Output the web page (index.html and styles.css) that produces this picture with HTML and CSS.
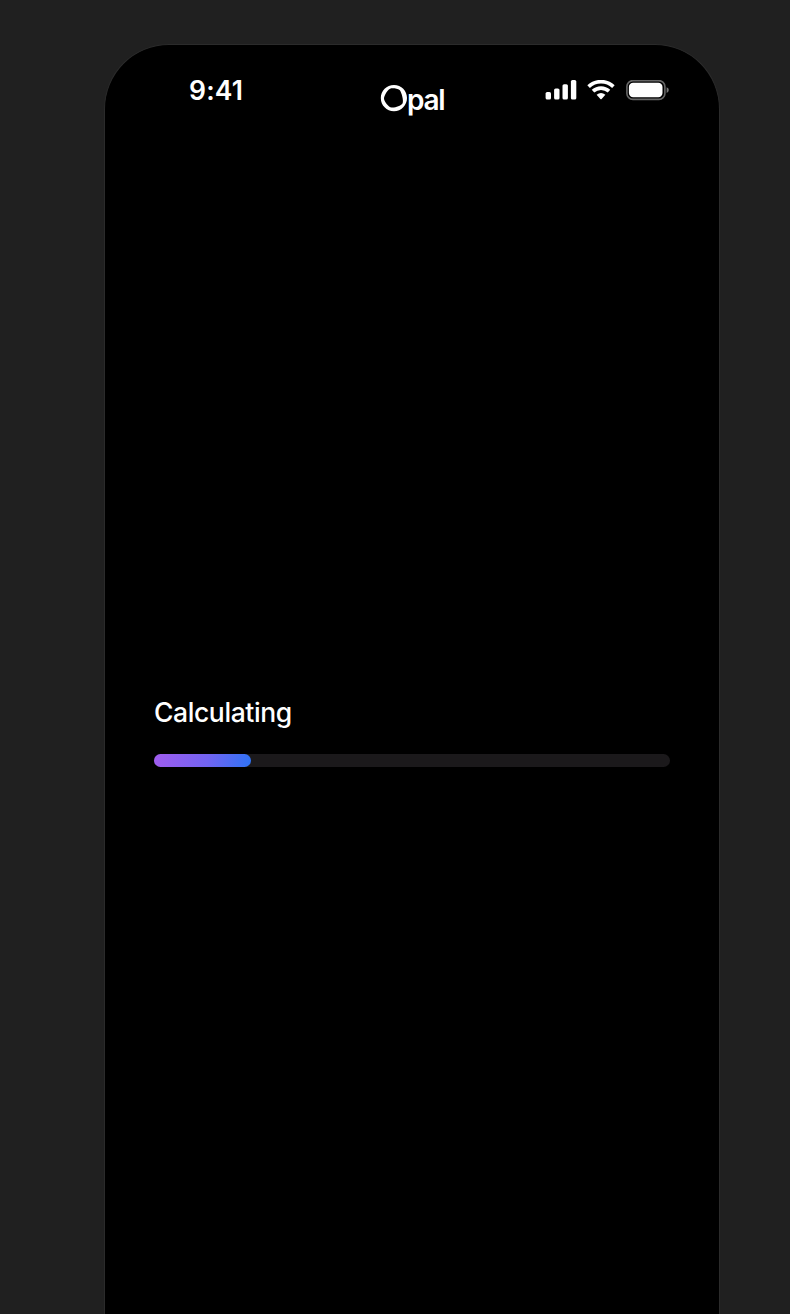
FILE: index.html
```html
<!DOCTYPE html>
<html lang="en">
<head>
<meta charset="utf-8">
<title>Opal</title>
<link rel="stylesheet" href="styles.css">
</head>
<body>
<main class="phone">
  <header class="status">
    <span class="time">9:41</span>
    <div class="brand">
      <svg class="ring" viewBox="0 0 28 28" width="28" height="28" aria-hidden="true">
        <path fill="#fff" fill-rule="evenodd" d="M14 .9C21.4 .9 27 6.8 27 14S21.4 27.2 14 27.2S.8 21.4 .8 14S6.6 .9 14 .9ZM11.2 4.2C8.4 4.4 4 11.6 4 14.4C4 17.4 8.6 23 11.6 23.5C14.8 24 21 21.8 22.5 19.6C24 17 21.6 8.2 19.6 6C17.8 4.3 13.8 4 11.2 4.2Z"/>
      </svg>
      <span class="word">pal</span>
    </div>
    <div class="indicators">
      <svg width="32" height="20" viewBox="0 0 32 20" fill="#fff" aria-hidden="true">
        <rect x=".6" y="12" width="5.4" height="7.6" rx="1.6"/>
        <rect x="9.1" y="8.4" width="5.4" height="11.2" rx="1.6"/>
        <rect x="17.5" y="4.2" width="5.4" height="15.4" rx="1.6"/>
        <rect x="25.9" y="0" width="5.4" height="19.6" rx="1.6"/>
      </svg>
      <svg class="wifi" width="28" height="20" viewBox="0 0 28 20" aria-hidden="true">
        <g fill="none" stroke="#fff" stroke-width="3.7">
          <path d="M1.6 6.6C8.6 0 19.4 0 26.4 6.6"/>
          <path d="M6 11.2C10.6 7 17.4 7 22 11.2"/>
        </g>
        <path fill="#fff" d="M9.6 14.8Q14 11.2 18.4 14.8L14.6 18.9Q14 19.5 13.4 18.9Z"/>
      </svg>
      <svg class="battery" width="44" height="22" viewBox="0 0 44 22" aria-hidden="true">
        <rect x=".9" y=".6" width="38" height="18.8" rx="6" fill="none" stroke="#666" stroke-width="1.6"/>
        <rect x="2.9" y="2.7" width="33.6" height="14.6" rx="4.2" fill="#fff"/>
        <path d="M40.6 7.2Q42.8 7.9 42.8 10T40.6 12.9Z" fill="#777"/>
      </svg>
    </div>
  </header>
  <section class="loading">
    <p class="label">Calculating</p>
    <div class="track"><div class="fill"></div></div>
  </section>
</main>
</body>
</html>
```

FILE: styles.css
```css
* { box-sizing: border-box; }
html, body { margin: 0; height: 100%; }
body {
  background: #202020;
  color: #fff;
  font-family: Inter, "Liberation Sans", sans-serif;
  padding: 44px 0 0 104px;
  overflow: hidden;
}
.phone {
  width: 616px;
  height: 1270px;
  background: #000;
  border: 1px solid #2b2b2b;
  border-bottom: 0;
  border-radius: 65px 65px 0 0;
  padding: 34px 49px 0;
}
.status {
  display: flex;
  height: 40px;
  align-items: flex-start;
}
.time {
  width: 226px;
  padding-left: 35px;
  font-size: 26.5px;
  line-height: 22px;
  font-weight: 600;
  letter-spacing: 0.2px;
}
.brand {
  display: flex;
  width: 165px;
  padding-top: 5px;
}
.ring { flex: none; }
.word {
  margin-left: -1px;
  font-size: 28px;
  line-height: 32px;
  font-weight: 600;
  letter-spacing: -1.3px;
}
.indicators { display: flex; padding-top: 1px; }
.indicators svg { flex: none; }
.wifi { margin-left: 10px; }
.battery { margin-left: 11px; }
.loading { padding-top: 577px; }
.label {
  margin: 0;
  font-size: 26.5px;
  line-height: 32px;
  font-weight: 500;
  letter-spacing: -0.4px;
}
.track {
  width: 516px;
  height: 13px;
  margin-top: 26px;
  border-radius: 7px;
  background: #1b191b;
}
.fill {
  width: 97px;
  height: 13px;
  border-radius: 7px;
  background: linear-gradient(100deg, #a05cee, #7264f2 55%, #2e73f5);
}
```
